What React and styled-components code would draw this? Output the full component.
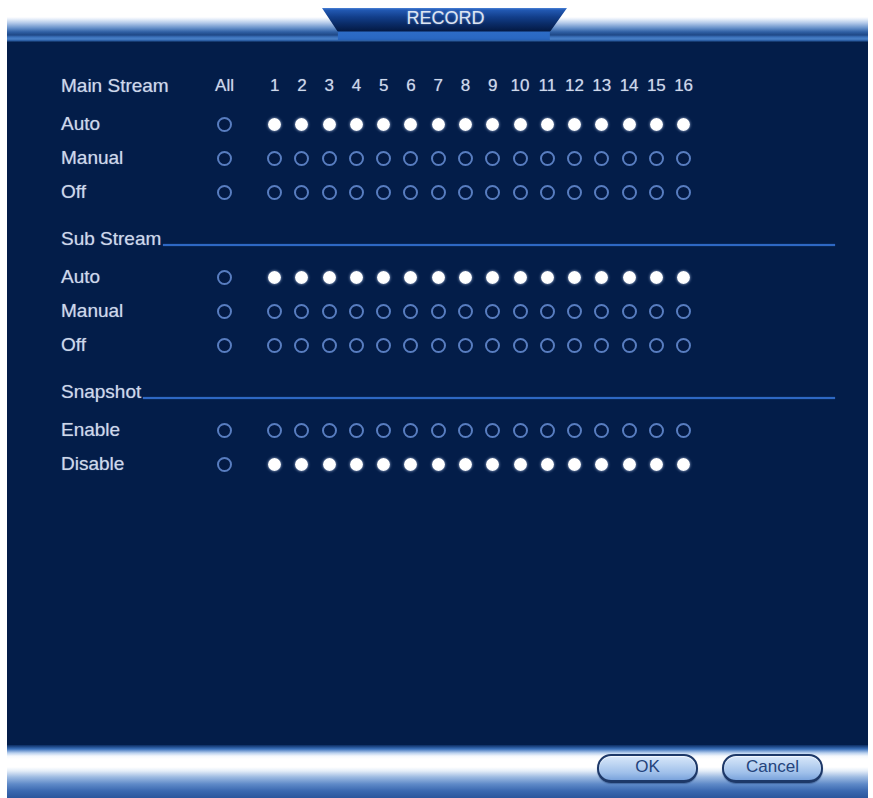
import React from 'react';
import styled, { createGlobalStyle } from 'styled-components';

const GlobalStyle = createGlobalStyle`
  html, body {
    margin: 0;
    padding: 0;
    background: #ffffff;
  }
  body {
    font-family: "Liberation Sans", Arial, sans-serif;
  }
`;

const Window = styled.div`
  width: 861px;
  height: 790px;
  margin: 8px 0 0 7px;
  display: flex;
  flex-direction: column;
`;

const TitleBar = styled.div`
  height: 34px;
  flex-shrink: 0;
  display: flex;
  padding-left: 315px;
  background: linear-gradient(
    to bottom,
    #ffffff 0,
    #ffffff 9px,
    #e9f0fa 11px,
    #b3c9e9 15px,
    #6690c9 20px,
    #2f5fa3 24px,
    #1f4886 27px,
    #3a70b9 29px,
    #4a81c7 31px,
    #2c5fa5 32.5px,
    #0a2756 34px
  );
`;

const Tab = styled.div`
  width: 245px;
  height: 32px;
  clip-path: polygon(0 0, 100% 0, 93% 75%, 93% 100%, 6.5% 100%, 6.5% 75%);
  background: linear-gradient(
    to bottom,
    #4a82d6 0,
    #2259b3 2px,
    #123e8a 9px,
    #0a2b66 16px,
    #041a45 23px,
    #2d6cc6 24px,
    #2a68c2 30px,
    #2560b6 32px
  );
  display: flex;
  justify-content: center;
  padding-top: 1px;
  box-sizing: border-box;
`;

const TabTitle = styled.span`
  font-size: 18px;
  line-height: 19px;
  color: #dde5f2;
  text-shadow: 0 0 2px rgba(200, 220, 255, 0.5);
  margin-left: 2px;
`;

const Body = styled.div`
  flex: 1;
  background: #031d49;
  padding: 27px 33px 0 54px;
  box-sizing: border-box;
`;

const Row = styled.div`
  display: flex;
  align-items: center;
  height: 34px;
  margin-top: ${(p) => (p.$section && !p.$first ? '13px' : '0')};
  margin-bottom: ${(p) => (p.$section ? '4px' : '0')};
`;

const Label = styled.div`
  width: 150px;
  flex-shrink: 0;
  font-size: 19px;
  color: #ced8ea;
  text-shadow: 0 0 1px rgba(200, 215, 240, 0.6);
  white-space: nowrap;
`;

const SectionLabel = styled.div`
  font-size: 19px;
  color: #ced8ea;
  text-shadow: 0 0 1px rgba(200, 215, 240, 0.6);
  white-space: nowrap;
`;

const Rule = styled.div`
  flex: 1;
  height: 2px;
  margin: 12px 0 0 2px;
  background: #2e68c4;
  box-shadow: 0 0 1px #3a78d8;
`;

const Cell = styled.div`
  width: ${(p) => (p.$all ? '27px' : '27.27px')};
  margin-right: ${(p) => (p.$all ? '23px' : '0')};
  flex-shrink: 0;
  display: flex;
  justify-content: center;
  align-items: center;
  font-size: 17px;
  color: #ced8ea;
  text-shadow: 0 0 1px rgba(200, 215, 240, 0.6);
`;

const Dot = styled.span`
  display: block;
  box-sizing: border-box;
  width: ${(p) => (p.$on ? '13px' : '15px')};
  height: ${(p) => (p.$on ? '13px' : '15px')};
  border-radius: 50%;
  ${(p) =>
    p.$on
      ? `background: radial-gradient(circle at 45% 40%, #ffffff 55%, #e3ecfa 100%);
         box-shadow: 0 0 3px rgba(210, 225, 255, 0.8);`
      : `border: 2px solid #587dc0;
         background: #031a44;`}
`;

const Footer = styled.div`
  height: 53px;
  flex-shrink: 0;
  display: flex;
  justify-content: flex-end;
  align-items: flex-start;
  gap: 24px;
  padding: 9px 45px 0 0;
  box-sizing: border-box;
  background: linear-gradient(
    to bottom,
    #0b2c62 0,
    #3b71bb 4px,
    #b9d0ee 8px,
    #f4f8fd 11px,
    #ffffff 14px,
    #ffffff 22px,
    #e4edf8 26px,
    #9ebbe2 32px,
    #5f8ac8 39px,
    #3a68b0 46px,
    #2a569c 53px
  );
`;

const Button = styled.button`
  width: 101px;
  height: 29px;
  padding: 0 0 2px;
  border-radius: 14px;
  border: 2px solid #1d3868;
  border-bottom-width: 3px;
  background: linear-gradient(
    to bottom,
    #d8e7fa 0,
    #bdd5f2 35%,
    #9fc0ea 70%,
    #7aa3dc 100%
  );
  box-shadow: inset 0 1px 1px rgba(255, 255, 255, 0.7), 0 1px 1px rgba(20, 50, 100, 0.4);
  color: #24447c;
  font-family: "Liberation Sans", Arial, sans-serif;
  font-size: 17px;
  cursor: pointer;
`;

const channels = Array.from({ length: 16 }, (_, i) => i + 1);

const sections = [
  {
    title: 'Main Stream',
    header: true,
    rows: [
      { label: 'Auto', on: true },
      { label: 'Manual', on: false },
      { label: 'Off', on: false },
    ],
  },
  {
    title: 'Sub Stream',
    rows: [
      { label: 'Auto', on: true },
      { label: 'Manual', on: false },
      { label: 'Off', on: false },
    ],
  },
  {
    title: 'Snapshot',
    rows: [
      { label: 'Enable', on: false },
      { label: 'Disable', on: true },
    ],
  },
];

const OptionRow = ({ label, on }) => (
  <Row>
    <Label>{label}</Label>
    <Cell $all>
      <Dot />
    </Cell>
    {channels.map((n) => (
      <Cell key={n}>
        <Dot $on={on} />
      </Cell>
    ))}
  </Row>
);

const App = () => {
  return (
    <>
      <GlobalStyle />
      <Window>
        <TitleBar>
          <Tab>
            <TabTitle>RECORD</TabTitle>
          </Tab>
        </TitleBar>
        <Body>
          {sections.map((s) => (
            <React.Fragment key={s.title}>
              {s.header ? (
                <Row $section $first>
                  <Label>{s.title}</Label>
                  <Cell $all>All</Cell>
                  {channels.map((n) => (
                    <Cell key={n}>{n}</Cell>
                  ))}
                </Row>
              ) : (
                <Row $section>
                  <SectionLabel>{s.title}</SectionLabel>
                  <Rule />
                </Row>
              )}
              {s.rows.map((r) => (
                <OptionRow key={r.label} label={r.label} on={r.on} />
              ))}
            </React.Fragment>
          ))}
        </Body>
        <Footer>
          <Button>OK</Button>
          <Button>Cancel</Button>
        </Footer>
      </Window>
    </>
  );
};

export default App;
